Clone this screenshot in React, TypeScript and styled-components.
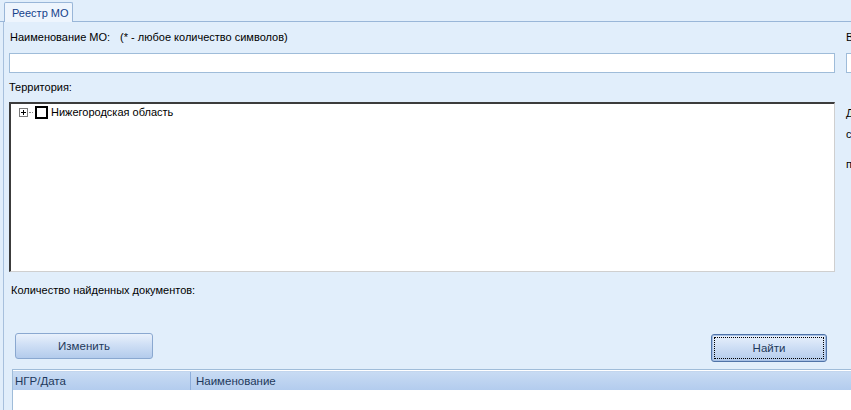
import styled, { createGlobalStyle } from 'styled-components';
import * as React from 'react';

const GlobalStyle = createGlobalStyle`
  html, body { margin:0; padding:0; }
  body {
    background:#e1eefb;
    font-family:"Liberation Sans", Arial, sans-serif;
    font-size:11px;
    color:#000;
  }
`;

const Screen = styled.div`
  width:851px; height:410px;
  overflow:hidden;
  background:#e1eefb;
  display:flex;
  flex-direction:column;
`;

const TabStrip = styled.div`
  height:22px;
  padding-left:4px;
  display:flex;
  align-items:flex-end;
  border-bottom:1px solid #99b6d8;
  box-sizing:border-box;
`;

const Tab = styled.div`
  height:20px;
  width:69px;
  box-sizing:border-box;
  padding:0 0 0 7px;
  display:flex;
  align-items:center;
  background:#eef5fd;
  border:1px solid #99b6d8;
  border-bottom:none;
  border-radius:2px 2px 0 0;
  color:#15428b;
  font-size:11px;
  margin-bottom:-1px;
  position:relative;
`;

const Panel = styled.div`
  flex:1;
  margin-left:3px;
  border-left:1px solid #a7c0dd;
  display:flex;
  min-height:0;
`;

const LeftCol = styled.div`
  width:826px;
  flex:none;
  padding-left:5px;
  display:flex;
  flex-direction:column;
`;

const RightCol = styled.div`
  flex:none;
  width:200px;
  margin-left:11px;
  display:flex;
  flex-direction:column;
  white-space:nowrap;
`;

const LabelRow = styled.div<{ top?: number; gap?: number; indent?: number }>`
  height:14px;
  line-height:14px;
  margin-top:${(p) => p.top ?? 0}px;
  display:flex;
  gap:${(p) => p.gap ?? 0}px;
  padding-left:${(p) => p.indent ?? 1}px;
  white-space:nowrap;
`;

const TextInput = styled.div<{ top?: number }>`
  height:20px;
  box-sizing:border-box;
  margin-top:${(p) => p.top ?? 0}px;
  background:#fff;
  border:1px solid #9fbcd9;
`;

const TreeBox = styled.div`
  height:170px;
  flex:none;
  box-sizing:border-box;
  margin-top:8px;
  background:#fff;
  border-top:2px solid #3c3c3c;
  border-left:2px solid #3c3c3c;
  border-right:1px solid #cfcfcf;
  border-bottom:1px solid #cfcfcf;
  padding:1px 0 0 8px;
`;

const TreeNode = styled.div`
  display:flex;
  align-items:center;
  height:14px;
`;

const Expander = styled.span`
  width:9px; height:9px;
  box-sizing:border-box;
  border:1px solid #7a7a7a;
  position:relative;
  background:#fff;
  &::before { content:""; position:absolute; left:1px; right:1px; top:3px; height:1px; background:#000; }
  &::after { content:""; position:absolute; top:1px; bottom:1px; left:3px; width:1px; background:#000; }
`;

const Dots = styled.span`
  width:4px;
  margin:0 2px 0 1px;
  border-top:1px dotted #888;
`;

const CheckBox = styled.span`
  width:13px; height:13px;
  box-sizing:border-box;
  border:2px solid #000;
  background:#fff;
  margin-right:3px;
`;

const ButtonRow = styled.div`
  margin-top:36px;
  height:29px;
  display:flex;
  align-items:flex-start;
  justify-content:space-between;
  padding:0 8px 0 6px;
`;

const Button = styled.button<{ focused?: boolean }>`
  font-family:"Liberation Sans", Arial, sans-serif;
  font-size:11.5px;
  color:#1e395b;
  width:${(p) => (p.focused ? 116 : 138)}px;
  height:${(p) => (p.focused ? 28 : 26)}px;
  margin-top:${(p) => (p.focused ? 1 : 0)}px;
  border-radius:3px;
  border:1px solid ${(p) => (p.focused ? '#4f73a8' : '#8aa8d0')};
  box-shadow:${(p) => (p.focused ? 'inset 0 0 0 1px #a7c0e4' : 'none')};
  background:linear-gradient(to bottom, #e9f1fc 0%, #cfdff5 45%, #b3cbec 100%);
  position:relative;
  padding:0;
  &::after {
    content:"";
    display:${(p) => (p.focused ? 'block' : 'none')};
    position:absolute;
    inset:2px;
    border:1px dotted #000;
  }
`;

const Grid = styled.div`
  margin-left:3px;
  margin-top:7px;
  border-top:1px solid #9fbcd9;
  border-left:1px solid #9fbcd9;
  padding-top:1px;
  flex:1;
  background:#fff;
  width:840px;
`;

const GridHeader = styled.div`
  height:18px;
  display:flex;
  border-top:1px solid #c3d6ee;
  background:linear-gradient(to bottom, #c8dbf3 0%, #b3ccee 100%);
  border-bottom:1px solid #fff;
`;

const HeaderCell = styled.div<{ w?: number }>`
  width:${(p) => (p.w ? `${p.w}px` : 'auto')};
  flex:${(p) => (p.w ? 'none' : '1')};
  box-sizing:border-box;
  padding-left:${(p) => (p.w ? 2 : 5)}px;
  line-height:18px;
  font-size:11.5px;
  color:#1e395b;
  border-right:${(p) => (p.w ? '1px solid #8eaedb' : 'none')};
`;

const App = () => {
  return (
    <>
      <GlobalStyle />
      <Screen>
        <TabStrip>
          <Tab>Реестр МО</Tab>
        </TabStrip>
        <Panel>
          <LeftCol>
            <LabelRow top={8} gap={10}>
              <span>Наименование МО:</span>
              <span>(* - любое количество символов)</span>
            </LabelRow>
            <TextInput top={9} />
            <LabelRow top={7} indent={0}>Территория:</LabelRow>
            <TreeBox>
              <TreeNode>
                <Expander />
                <Dots />
                <CheckBox />
                <span>Нижегородская область</span>
              </TreeNode>
            </TreeBox>
            <LabelRow top={11} indent={2}>Количество найденных документов:</LabelRow>
            <ButtonRow>
              <Button>Изменить</Button>
              <Button focused>Найти</Button>
            </ButtonRow>
            <Grid>
              <GridHeader>
                <HeaderCell w={178}>НГР/Дата</HeaderCell>
                <HeaderCell>Наименование</HeaderCell>
              </GridHeader>
            </Grid>
          </LeftCol>
          <RightCol>
            <LabelRow top={8} indent={0}>Вид МО:</LabelRow>
            <TextInput top={9} />
            <LabelRow top={33} indent={0}>Дата изменения:</LabelRow>
            <LabelRow top={7} indent={0}>с</LabelRow>
            <LabelRow top={16} indent={0}>по</LabelRow>
          </RightCol>
        </Panel>
      </Screen>
    </>
  );
};

export default App;
